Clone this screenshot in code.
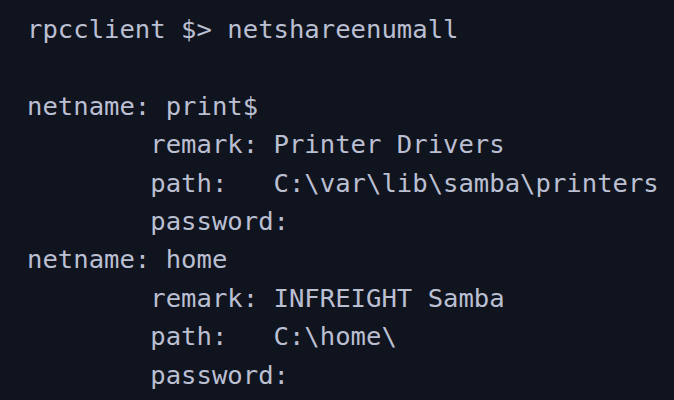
const lines = [
  'rpcclient $> netshareenumall',
  '',
  'netname: print$',
  '\tremark: Printer Drivers',
  '\tpath:   C:\\var\\lib\\samba\\printers',
  '\tpassword:',
  'netname: home',
  '\tremark: INFREIGHT Samba',
  '\tpath:   C:\\home\\',
  '\tpassword:',
]

const App = () => {
  return (
    <div className="w-[674px] h-[400px] overflow-hidden bg-[#10141e]">
      <pre className="pl-[27px] pt-[10px] font-['DejaVu_Sans_Mono',monospace] text-[25.6px] leading-[1.5] text-[#bbbfd2] [tab-size:8]">
        {lines.join('\n')}
      </pre>
    </div>
  )
}

export default App
